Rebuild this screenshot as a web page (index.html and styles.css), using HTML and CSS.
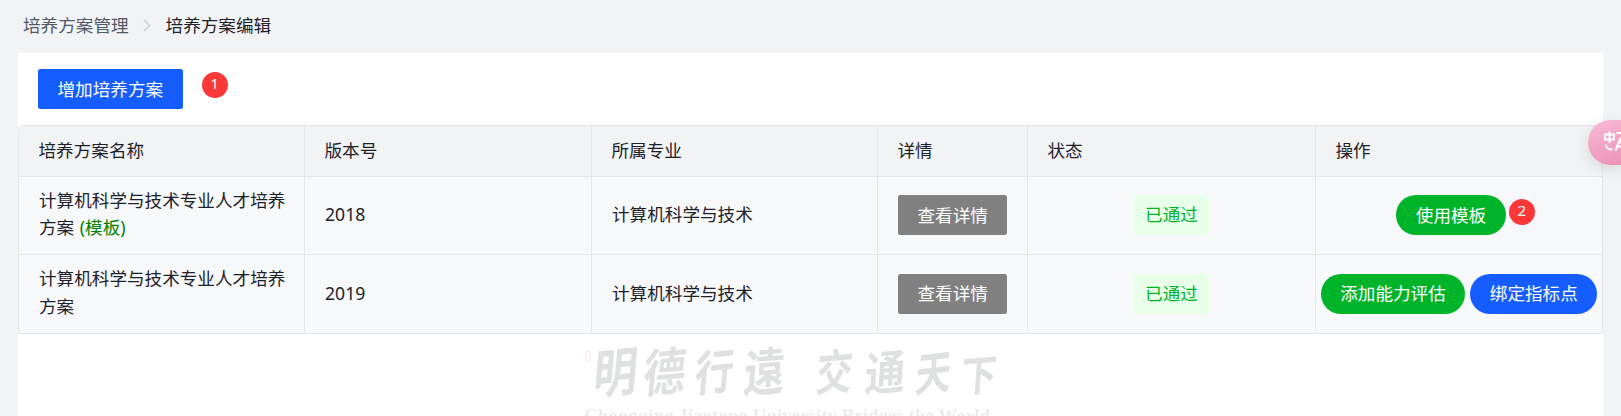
FILE: index.html
```html
<!DOCTYPE html>
<html lang="zh-CN">
<head>
<meta charset="utf-8">
<title>培养方案编辑</title>
<link rel="stylesheet" href="styles.css">
</head>
<body>
<nav class="breadcrumb">
  <span class="crumb">培养方案管理</span>
  <svg class="chevron" viewBox="0 0 8 13" width="8" height="13"><path d="M1 1l5.700 5.500L1 12" fill="none" stroke="#c9cdd4" stroke-width="1.500"/></svg>
  <span class="crumb current">培养方案编辑</span>
</nav>
<main class="panel">
  <div class="toolbar">
    <button class="btn primary">增加培养方案</button>
    <span class="badge">1</span>
  </div>
  <div class="table">
    <div class="cell head">培养方案名称</div>
    <div class="cell head">版本号</div>
    <div class="cell head">所属专业</div>
    <div class="cell head">详情</div>
    <div class="cell head">状态</div>
    <div class="cell head">操作</div>

    <div class="cell"><p class="name">计算机科学与技术专业人才培养方案 <span class="template">(模板)</span></p></div>
    <div class="cell">2018</div>
    <div class="cell">计算机科学与技术</div>
    <div class="cell"><button class="btn gray">查看详情</button></div>
    <div class="cell center"><span class="tag">已通过</span></div>
    <div class="cell center actions single"><button class="btn round green">使用模板</button><span class="badge">2</span></div>

    <div class="cell"><p class="name">计算机科学与技术专业人才培养方案</p></div>
    <div class="cell">2019</div>
    <div class="cell">计算机科学与技术</div>
    <div class="cell"><button class="btn gray">查看详情</button></div>
    <div class="cell center"><span class="tag">已通过</span></div>
    <div class="cell center actions"><button class="btn round green">添加能力评估</button><button class="btn round primary">绑定指标点</button></div>
  </div>
  <svg class="motto" viewBox="0 0 440 82" width="440" height="82">
    <rect x="18" y="17" width="4" height="11" rx="1" fill="none" stroke="#fcf1f4" stroke-width="2"/>
    <g class="brush" text-anchor="middle">
      <text transform="translate(46 58) skewY(-5) skewX(-5) scale(.92 1.1)">明</text>
      <text transform="translate(95 57) skewY(-5) skewX(-5) scale(.88 1.06)">德</text>
      <text transform="translate(145 56) skewY(-6) skewX(-5) scale(.82 1)">行</text>
      <text transform="translate(195 57) skewY(-4) skewX(-4) scale(.86 1.08)">遠</text>
      <text transform="translate(265 56) skewY(-5) skewX(-5) scale(.76 1)">交</text>
      <text transform="translate(316 56) skewY(-4) skewX(-4) scale(.84 .98)">通</text>
      <text transform="translate(364 56) skewY(-7) skewX(-5) scale(.74 .96)">天</text>
      <text transform="translate(410 57) skewY(-5) skewX(-4) scale(.74 .88)">下</text>
    </g>
    <text class="english" x="16" y="88" textLength="406" lengthAdjust="spacingAndGlyphs">Chongqing Jiaotong University Bridges the World</text>
  </svg>
</main>
<aside class="translate">
  <svg viewBox="0 0 24 22" width="24" height="22" fill="none" stroke="#fff" stroke-width="2">
    <path d="M1 3.500h9v5H1zM5.500 .5v11.500M2 13.500c0 4 2 5 6.500 5M12.500 2h5q3 0 3 3M11.500 19.500l4.500-11 4.500 11M13 15.500h6"/>
  </svg>
</aside>
</body>
</html>
```
FILE: styles.css
```css
* { box-sizing: border-box; }

body {
  margin: 0;
  height: 416px;
  overflow: hidden;
  display: flex;
  flex-direction: column;
  background: #f2f3f5;
  color: #1d2129;
  font: 400 17.6px/27.5px "Noto Sans", "Noto Sans CJK SC", sans-serif;
}

.breadcrumb {
  height: 53px;
  padding: 0 0 2px 23px;
  display: flex;
  align-items: center;
}

.crumb { color: #4e5969; }
.crumb.current { color: #1d2129; }
.chevron { margin: 0 15px 0 14px; }

.panel {
  flex: 1;
  width: 1585px;
  margin-left: 18px;
  background: #fff;
  overflow: hidden;
}

.toolbar {
  height: 72px;
  padding: 16px 20px;
  display: flex;
  align-items: flex-start;
  gap: 19px;
}

.toolbar .badge { margin-top: 3px; }

.btn {
  flex: none;
  height: 40px;
  padding: 0 19.5px;
  border: 0;
  border-radius: 2.5px;
  color: #fff;
  font: inherit;
  line-height: 39px;
  white-space: nowrap;
}

.primary { background: #165dff; }
.green { background: #00b42a; }
.gray { background: #808080; }
.round { border-radius: 20px; }

.badge {
  flex: none;
  width: 26px;
  height: 26px;
  border-radius: 50%;
  background: #fa3838;
  color: #fff;
  font-size: 15px;
  line-height: 23px;
  text-align: center;
}

.table {
  display: grid;
  grid-template-columns: 286px 287px 286px 150px 288px 287px;
  grid-template-rows: 51px 78px 79px;
  border: solid #e5e6eb;
  border-width: 1px 0 0 1px;
  border-top-left-radius: 5px;
  overflow: hidden;
}

.cell {
  display: flex;
  align-items: center;
  min-width: 0;
  padding: 0 18px 1px 20px;
  border: solid #e5e6eb;
  border-width: 0 1px 1px 0;
  background: #f7f8fa;
}

.cell.head { background: #f2f3f5; padding-left: 19.5px; }
.center { justify-content: center; }
.name { margin: -2px 0 0; }
.template { margin-left: 1px; color: #008000; }

.tag {
  height: 40px;
  padding: 0 11px;
  margin-right: 2px;
  border-radius: 2.5px;
  background: #e8ffea;
  color: #00b42a;
  line-height: 39px;
}

.cell.actions { padding: 0 5px 1px; gap: 5px; }
.cell.single { gap: 3px; padding-left: 18px; }
.single .badge { margin-top: -6px; }

.motto { display: block; margin-left: 550px; }

.brush {
  font: 700 48px "Noto Sans CJK SC", sans-serif;
  fill: #dfe1e1;
  filter: blur(.7px);
}

.english {
  font: 700 18px "Liberation Serif", serif;
  fill: #ececec;
  filter: blur(.5px);
}

.translate {
  position: absolute;
  top: 120px;
  right: 0;
  width: 33px;
  height: 45px;
  padding: 11px 0 0 16px;
  overflow: hidden;
  border-radius: 23px 0 0 23px;
  background: linear-gradient(160deg, #f8bbd6, #ec92b8);
  box-shadow: 0 4px 14px rgba(0, 0, 0, .12);
}
```
